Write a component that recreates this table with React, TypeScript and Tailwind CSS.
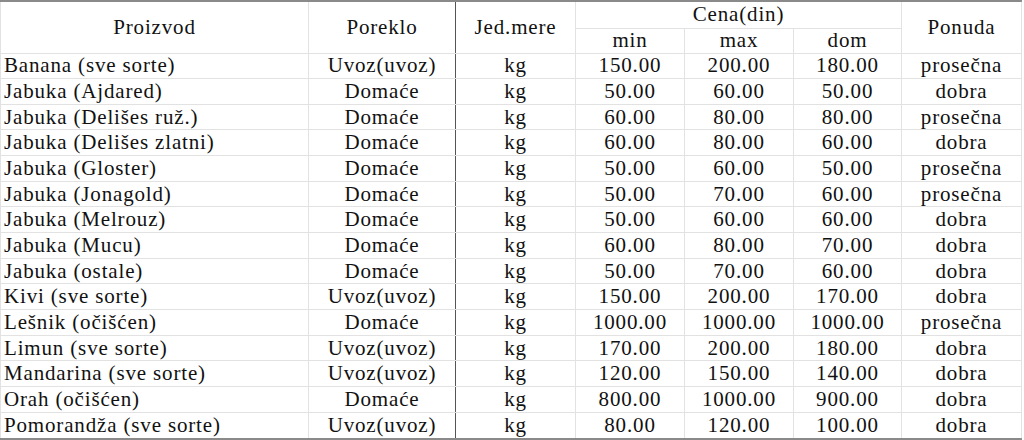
import React from "react";

const rows: [string, string, string, string, string, string, string][] = [
  ["Banana (sve sorte)", "Uvoz(uvoz)", "kg", "150.00", "200.00", "180.00", "prosečna"],
  ["Jabuka (Ajdared)", "Domaće", "kg", "50.00", "60.00", "50.00", "dobra"],
  ["Jabuka (Delišes ruž.)", "Domaće", "kg", "60.00", "80.00", "80.00", "prosečna"],
  ["Jabuka (Delišes zlatni)", "Domaće", "kg", "60.00", "80.00", "60.00", "dobra"],
  ["Jabuka (Gloster)", "Domaće", "kg", "50.00", "60.00", "50.00", "prosečna"],
  ["Jabuka (Jonagold)", "Domaće", "kg", "50.00", "70.00", "60.00", "prosečna"],
  ["Jabuka (Melrouz)", "Domaće", "kg", "50.00", "60.00", "60.00", "dobra"],
  ["Jabuka (Mucu)", "Domaće", "kg", "60.00", "80.00", "70.00", "dobra"],
  ["Jabuka (ostale)", "Domaće", "kg", "50.00", "70.00", "60.00", "dobra"],
  ["Kivi (sve sorte)", "Uvoz(uvoz)", "kg", "150.00", "200.00", "170.00", "dobra"],
  ["Lešnik (očišćen)", "Domaće", "kg", "1000.00", "1000.00", "1000.00", "prosečna"],
  ["Limun (sve sorte)", "Uvoz(uvoz)", "kg", "170.00", "200.00", "180.00", "dobra"],
  ["Mandarina (sve sorte)", "Uvoz(uvoz)", "kg", "120.00", "150.00", "140.00", "dobra"],
  ["Orah (očišćen)", "Domaće", "kg", "800.00", "1000.00", "900.00", "dobra"],
  ["Pomorandža (sve sorte)", "Uvoz(uvoz)", "kg", "80.00", "120.00", "100.00", "dobra"],
];

const cell = "border border-[#e2e2e2] p-0 align-middle";

export default function App() {
  return (
    <div className="w-[1024px] h-[440px] bg-white overflow-hidden font-['Liberation_Serif',serif]">
      <div className="w-[1022px] border-t-[2px] border-t-[#8a8a8a] border-b-[2px] border-b-[#8a8a8a] border-r border-r-[#9a9a9a]">
        <table className="w-[1021px] table-fixed border-collapse text-[21px] leading-none tracking-[0.04em] text-[#111] font-['Liberation_Serif',serif]">
          <colgroup>
            <col className="w-[308px]" />
            <col className="w-[147px]" />
            <col className="w-[120px]" />
            <col className="w-[109px]" />
            <col className="w-[109px]" />
            <col className="w-[108px]" />
            <col className="w-[120px]" />
          </colgroup>
          <thead>
            <tr className="h-[26px]">
              <th rowSpan={2} className={`${cell} font-normal text-center border-t-0`}>Proizvod</th>
              <th rowSpan={2} className={`${cell} font-normal text-center border-t-0 border-r-[#555]`}>Poreklo</th>
              <th rowSpan={2} className={`${cell} font-normal text-center border-t-0 border-l-[#555]`}>Jed.mere</th>
              <th colSpan={3} className={`${cell} font-normal text-center border-t-0`}>Cena(din)</th>
              <th rowSpan={2} className={`${cell} font-normal text-center border-t-0`}>Ponuda</th>
            </tr>
            <tr className="h-[25px]">
              <th className={`${cell} font-normal text-center`}>min</th>
              <th className={`${cell} font-normal text-center`}>max</th>
              <th className={`${cell} font-normal text-center`}>dom</th>
            </tr>
          </thead>
          <tbody>
            {rows.map((r, i) => {
              const last = i === rows.length - 1 ? "border-b-0" : "";
              return (
                <tr key={i} className="h-[25.67px]">
                  <td className={`${cell} pl-[3px] text-left whitespace-nowrap ${last}`}>{r[0]}</td>
                  <td className={`${cell} text-center border-r-[#555] ${last}`}>{r[1]}</td>
                  <td className={`${cell} text-center border-l-[#555] ${last}`}>{r[2]}</td>
                  <td className={`${cell} text-center ${last}`}>{r[3]}</td>
                  <td className={`${cell} text-center ${last}`}>{r[4]}</td>
                  <td className={`${cell} text-center ${last}`}>{r[5]}</td>
                  <td className={`${cell} text-center ${last}`}>{r[6]}</td>
                </tr>
              );
            })}
          </tbody>
        </table>
      </div>
    </div>
  );
}
